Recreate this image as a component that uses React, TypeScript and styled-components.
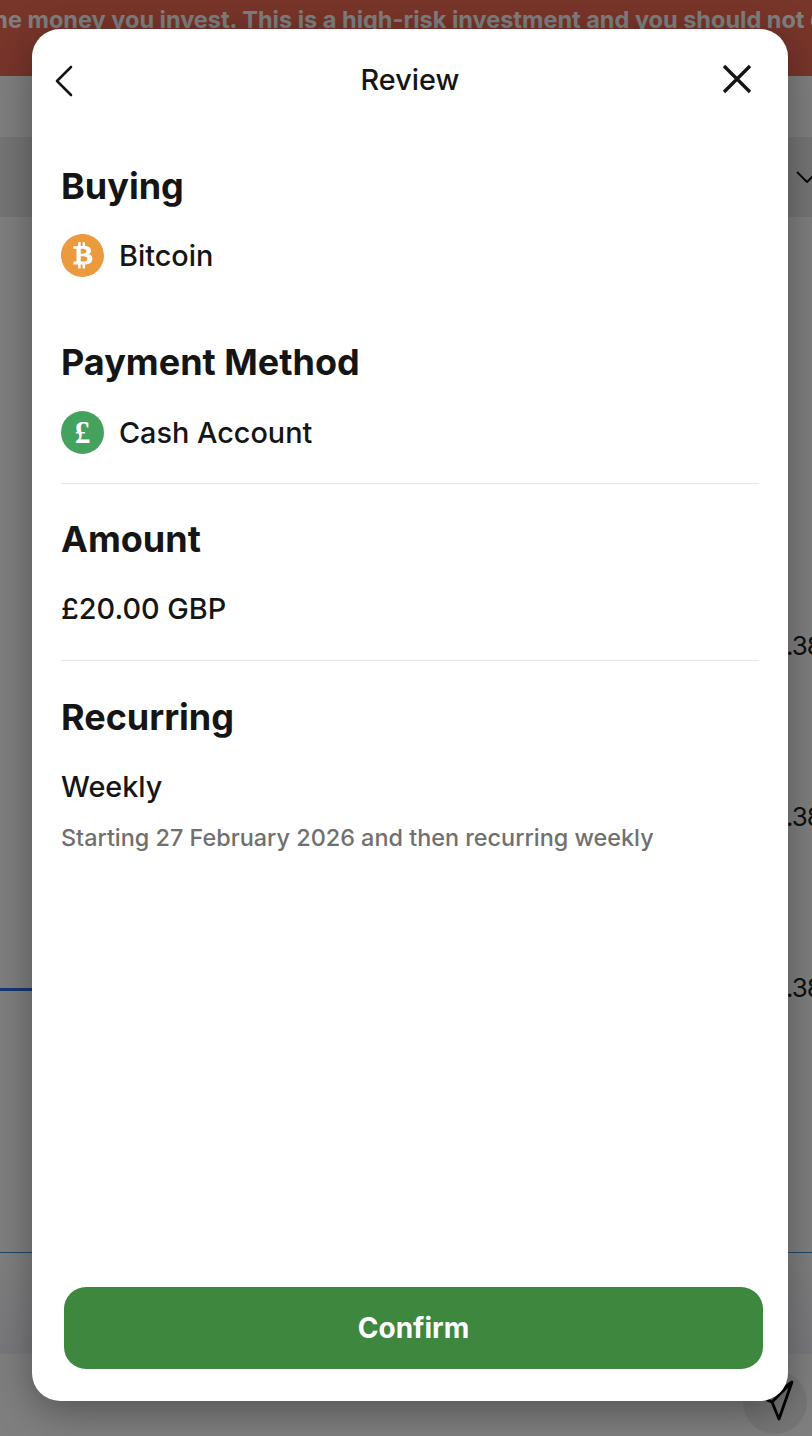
import React from 'react'
import styled, { createGlobalStyle } from 'styled-components'
import { SiBitcoin } from 'react-icons/si'

const GlobalStyle = createGlobalStyle`
  html, body {
    margin: 0;
    padding: 0;
    background: #fff;
    font-family: Inter, "Liberation Sans", sans-serif;
  }
  * {
    box-sizing: border-box;
  }
`

const Page = styled.div`
  position: relative;
  width: 812px;
  height: 1436px;
  overflow: hidden;
  display: flex;
  flex-direction: column;
  background: #fff;
`

const RiskBanner = styled.div`
  height: 76px;
  flex-shrink: 0;
  padding-top: 6px;
  overflow: hidden;
  background: #f06a54;
  color: #fff;
  font-size: 23.5px;
  line-height: 27px;
  font-weight: 700;
  white-space: nowrap;
`

const RiskText = styled.span`
  display: inline-block;
  margin-left: -249px;
`

const FilterBar = styled.div`
  height: 80px;
  flex-shrink: 0;
  margin-top: 61px;
  padding-left: 796px;
  display: flex;
  align-items: center;
  background: #ebebeb;
  color: #111;
`

const FilterChevron = styled.svg`
  display: block;
  flex-shrink: 0;
  width: 22px;
  height: 12px;
`

const PriceList = styled.div`
  height: 772px;
  flex-shrink: 0;
  padding: 411px 0 0 786px;
  display: flex;
  flex-direction: column;
  gap: 135px;
`

const Price = styled.div`
  font-size: 26px;
  line-height: 36px;
  letter-spacing: -1px;
  color: #222;
  white-space: nowrap;
`

const ChartLine = styled.div`
  position: absolute;
  left: 0;
  top: 988px;
  width: 400px;
  height: 3px;
  background: #2f6ee8;
`

const BottomPanel = styled.div`
  height: 102px;
  flex-shrink: 0;
  margin-top: 263px;
  border-top: 1px solid #3f8fd0;
  background: linear-gradient(180deg, #fff 0%, #f2f2fa 100%);
`

const SendButton = styled.div`
  position: absolute;
  left: 743px;
  top: 1370px;
  width: 64px;
  height: 64px;
  border-radius: 50%;
  background: #ededed;
  color: #000;
`

const SendIcon = styled.svg`
  display: block;
  width: 64px;
  height: 64px;
`

const Scrim = styled.div`
  position: absolute;
  inset: 0;
  background: rgba(0, 0, 0, 0.5);
`

const Modal = styled.div`
  position: absolute;
  left: 32px;
  top: 29px;
  width: 756px;
  height: 1372px;
  display: flex;
  flex-direction: column;
  padding: 0 29px;
  border-radius: 28px;
  background: #fff;
  box-shadow: 0 10px 40px rgba(0, 0, 0, 0.35);
  color: #151515;
`

const Header = styled.header`
  height: 102px;
  flex-shrink: 0;
  margin: 0 4px 33px -13px;
  display: flex;
  align-items: center;
  justify-content: space-between;
`

const HeaderButton = styled.button`
  width: 36px;
  height: 36px;
  padding: 0;
  border: none;
  background: none;
  color: #151515;
`

const HeaderIcon = styled.svg`
  display: block;
  width: 36px;
  height: 36px;
`

const Title = styled.h1`
  margin: 0 0 0 17px;
  font-size: 28.8px;
  line-height: 36px;
  font-weight: 500;
`

const Section = styled.section<{ $pad?: number; $gap?: number; $divided?: boolean }>`
  padding-bottom: ${(p) => p.$pad ?? 0}px;
  margin-bottom: ${(p) => p.$gap ?? 0}px;
  border-bottom: ${(p) => (p.$divided ? '1px solid #e6e6e6' : 'none')};
`

const SectionTitle = styled.h2`
  margin: 0 0 27px;
  font-size: 36px;
  line-height: 44px;
  font-weight: 700;
`

const PlainTitle = styled(SectionTitle)`
  margin-bottom: 0;
`

const AssetRow = styled.div<{ $lift?: number }>`
  display: flex;
  align-items: center;
  gap: 15px;
  height: 43px;
  margin-top: ${(p) => -(p.$lift ?? 0)}px;
`

const AssetBadge = styled.span<{ $color: string }>`
  width: 43px;
  height: 43px;
  flex-shrink: 0;
  display: flex;
  align-items: center;
  justify-content: center;
  border-radius: 50%;
  background: ${(p) => p.$color};
  color: #fff;
  font-family: "Liberation Serif", serif;
  font-size: 31px;
  line-height: 1;
  font-weight: 700;
`

const BitcoinLogo = styled(SiBitcoin)`
  display: block;
  width: 43px;
  height: 43px;
  flex-shrink: 0;
  color: #ec9a3e;
  transform: rotate(-14deg);
`

const Value = styled.div`
  font-size: 28.8px;
  line-height: 36px;
  font-weight: 500;
`

const PlainValue = styled(Value)`
  margin-top: 30px;
`

const Note = styled.div`
  margin-top: 20px;
  font-size: 23.4px;
  line-height: 26px;
  font-weight: 500;
  color: #707070;
`

const ConfirmButton = styled.button`
  height: 82px;
  margin: auto -4px 32px 3px;
  flex-shrink: 0;
  border: none;
  border-radius: 22px;
  background: #3e873f;
  color: #fff;
  font-family: inherit;
  font-size: 28px;
  font-weight: 700;
`

export default function App() {
  return (
    <Page>
      <GlobalStyle />
      <RiskBanner>
        <RiskText>You could lose all of the money you invest. This is a high-risk investment and you should not expect to be protected</RiskText>
      </RiskBanner>
      <FilterBar>
        <FilterChevron viewBox="0 0 22 12" fill="none" stroke="currentColor" strokeWidth="2">
          <path d="M1 1l10 10L21 1" />
        </FilterChevron>
      </FilterBar>
      <PriceList>
        <Price>.38</Price>
        <Price>.38</Price>
        <Price>.38</Price>
      </PriceList>
      <ChartLine />
      <BottomPanel />
      <SendButton>
        <SendIcon viewBox="0 0 64 64" fill="none" stroke="currentColor" strokeWidth="2.8" strokeLinejoin="round">
          <path d="M49 12 24 30l5 2 7 17zM49 12 29 32" />
        </SendIcon>
      </SendButton>
      <Scrim />
      <Modal>
        <Header>
          <HeaderButton>
            <HeaderIcon viewBox="0 0 36 36" fill="none" stroke="currentColor" strokeWidth="2.6" strokeLinecap="round" strokeLinejoin="round">
              <path d="M24 4 10 18l14 14" transform="translate(-1 1)" />
            </HeaderIcon>
          </HeaderButton>
          <Title>Review</Title>
          <HeaderButton>
            <HeaderIcon viewBox="0 0 36 36" fill="none" stroke="currentColor" strokeWidth="3.4">
              <path d="M5 4l26 26M31 4 5 30" />
            </HeaderIcon>
          </HeaderButton>
        </Header>
        <Section $pad={63}>
          <SectionTitle>Buying</SectionTitle>
          <AssetRow $lift={1}>
            <BitcoinLogo />
            <Value>Bitcoin</Value>
          </AssetRow>
        </Section>
        <Section $pad={29} $gap={33} $divided>
          <SectionTitle>Payment Method</SectionTitle>
          <AssetRow>
            <AssetBadge $color="#45a15e">£</AssetBadge>
            <Value>Cash Account</Value>
          </AssetRow>
        </Section>
        <Section $pad={33} $gap={34} $divided>
          <PlainTitle>Amount</PlainTitle>
          <PlainValue>£20.00 GBP</PlainValue>
        </Section>
        <Section>
          <PlainTitle>Recurring</PlainTitle>
          <PlainValue>Weekly</PlainValue>
          <Note>Starting 27 February 2026 and then recurring weekly</Note>
        </Section>
        <ConfirmButton>Confirm</ConfirmButton>
      </Modal>
    </Page>
  )
}
